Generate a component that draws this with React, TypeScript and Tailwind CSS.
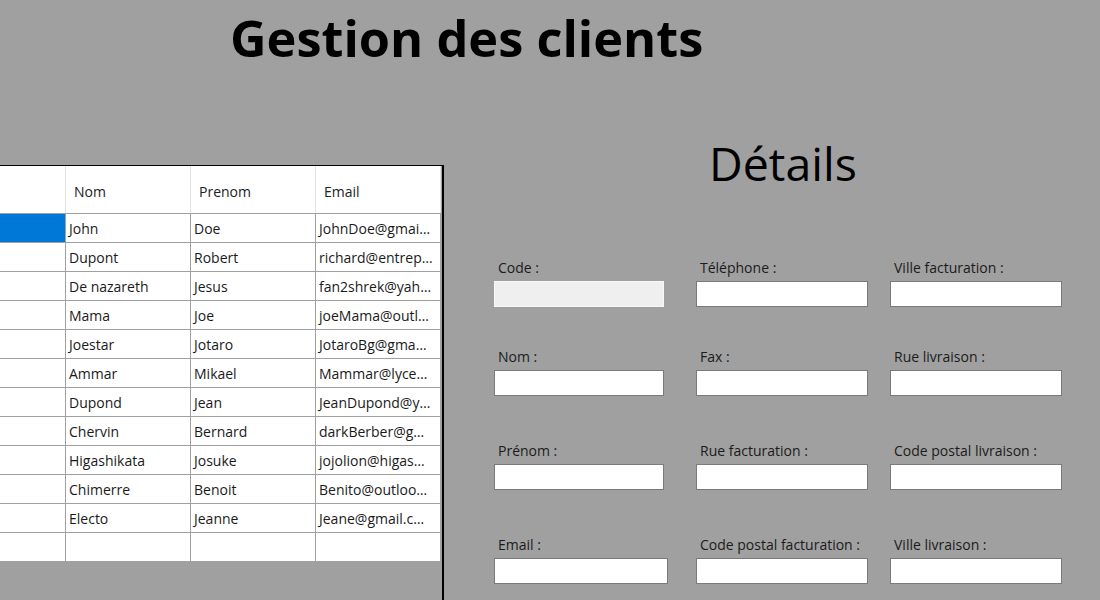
import React from "react";

const rows: [string, string, string][] = [
  ["John", "Doe", "JohnDoe@gmai…"],
  ["Dupont", "Robert", "richard@entrep…"],
  ["De nazareth", "Jesus", "fan2shrek@yah…"],
  ["Mama", "Joe", "joeMama@outl…"],
  ["Joestar", "Jotaro", "JotaroBg@gma…"],
  ["Ammar", "Mikael", "Mammar@lyce…"],
  ["Dupond", "Jean", "JeanDupond@y…"],
  ["Chervin", "Bernard", "darkBerber@g…"],
  ["Higashikata", "Josuke", "jojolion@higas…"],
  ["Chimerre", "Benoit", "Benito@outloo…"],
  ["Electo", "Jeanne", "Jeane@gmail.c…"],
  ["", "", ""],
];

function Field({ label, w, disabled }: { label: string; w: string; disabled?: boolean }) {
  return (
    <div className="flex flex-col">
      <div className="h-[19px] pl-1 text-[14px] leading-[19px] text-[#1b1b1b] whitespace-nowrap">{label}</div>
      <div
        className={
          disabled
            ? `mt-[4px] h-[26px] ${w} border border-[#f8f8f8] bg-[#efefef]`
            : `mt-[4px] h-[26px] ${w} border border-[#7a7a7a] bg-white`
        }
      />
    </div>
  );
}

export default function App() {
  return (
    <div
      className="w-[1100px] h-[600px] bg-[#a0a0a0] overflow-hidden flex flex-col"
      style={{ fontFamily: '"Open Sans", "Noto Sans", sans-serif' }}
    >
      <div className="h-[100px] shrink-0 pl-[230px] pt-[2px]">
        <div className="text-[50.5px] font-bold leading-[72px] text-black whitespace-nowrap">Gestion des clients</div>
      </div>
      <div className="flex flex-row flex-1">
        <div className="w-[444px] shrink-0 mt-[65px] border-t border-black border-r-2 border-r-black h-[500px]">
          <div className="w-[441px] bg-white text-[14px] text-[#1a1a1a]">
            <div className="flex h-[48px] border-b border-[#a0a0a0] text-[#222]">
              <div className="w-[66px] border-r border-[#e3e3e3]" />
              <div className="w-[125px] border-r border-[#e3e3e3] flex items-center pl-[8px] pt-[3px]">Nom</div>
              <div className="w-[125px] border-r border-[#e3e3e3] flex items-center pl-[8px] pt-[3px]">Prenom</div>
              <div className="w-[125px] border-r border-[#e3e3e3] flex items-center pl-[8px] pt-[3px]">Email</div>
            </div>
            {rows.map((r, i) => (
              <div key={i} className="flex h-[29px] border-b border-[#a0a0a0]">
                <div className={i === 0 ? "w-[66px] border-r border-[#a0a0a0] bg-[#0078d7]" : "w-[66px] border-r border-[#a0a0a0]"} />
                <div className="w-[125px] border-r border-[#a0a0a0] flex items-center pl-[3px] overflow-hidden whitespace-nowrap">{r[0]}</div>
                <div className="w-[125px] border-r border-[#a0a0a0] flex items-center pl-[3px] overflow-hidden whitespace-nowrap">{r[1]}</div>
                <div className="w-[125px] border-r border-[#a0a0a0] flex items-center pl-[3px] overflow-hidden whitespace-nowrap">{r[2]}</div>
              </div>
            ))}
          </div>
        </div>
        <div className="flex-1 flex flex-col">
          <div className="mt-[31px] h-[64px] pl-[265px] text-[46.5px] leading-[64px] text-black whitespace-nowrap">Détails</div>
          <div className="mt-[63px] pl-[50px] grid grid-cols-[202px_194px_172px]">
            <Field label="Code :" w="w-[170px]" disabled />
            <Field label="Téléphone :" w="w-[172px]" />
            <Field label="Ville facturation :" w="w-[172px]" />
          </div>
          <div className="mt-[40px] pl-[50px] grid grid-cols-[202px_194px_172px]">
            <Field label="Nom :" w="w-[170px]" />
            <Field label="Fax :" w="w-[172px]" />
            <Field label="Rue livraison :" w="w-[172px]" />
          </div>
          <div className="mt-[45px] pl-[50px] grid grid-cols-[202px_194px_172px]">
            <Field label="Prénom :" w="w-[170px]" />
            <Field label="Rue facturation :" w="w-[172px]" />
            <Field label="Code postal livraison :" w="w-[172px]" />
          </div>
          <div className="mt-[45px] pl-[50px] grid grid-cols-[202px_194px_172px]">
            <Field label="Email :" w="w-[174px]" />
            <Field label="Code postal facturation :" w="w-[172px]" />
            <Field label="Ville livraison :" w="w-[172px]" />
          </div>
        </div>
      </div>
    </div>
  );
}
